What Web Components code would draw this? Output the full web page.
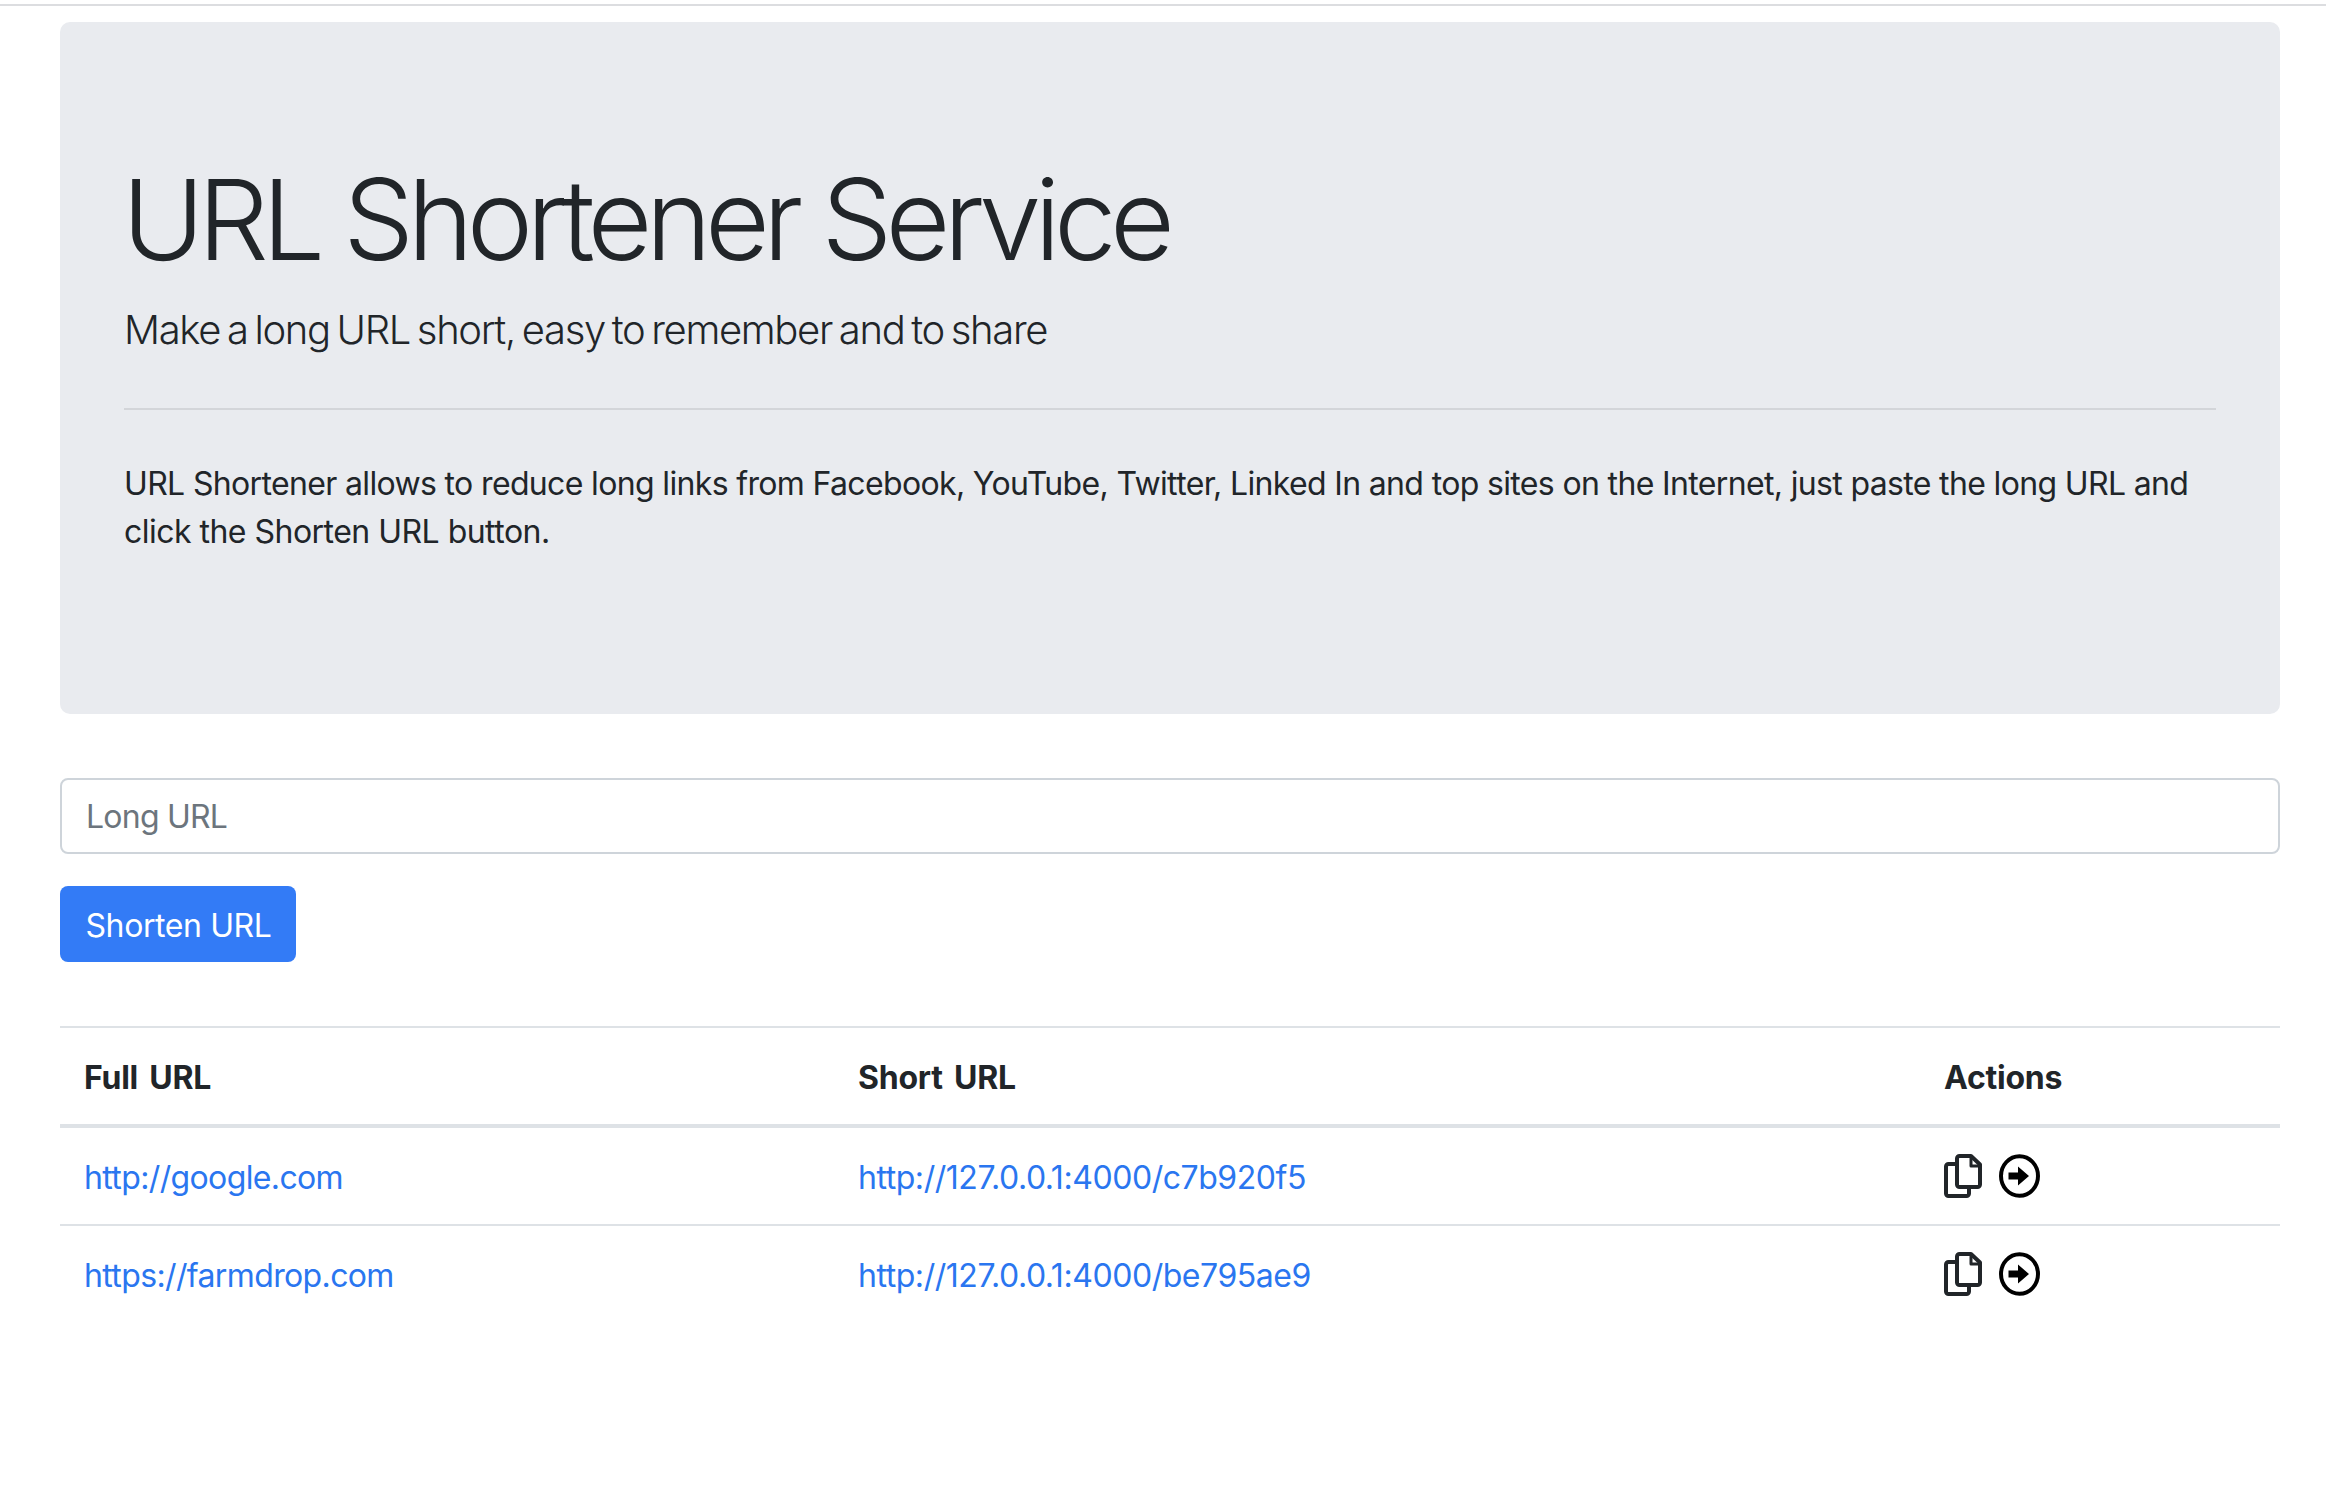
<!DOCTYPE html>
<html lang="en"><head><meta charset="utf-8"><title>URL Shortener</title>
<style>
html,body{margin:0;background:#fff}
body{font:400 32px/48px Inter,"Liberation Sans",sans-serif;color:#212529}
.line2{letter-spacing:-.52px}
</style></head><body>
<url-app>
  <url-hero title-text="URL Shortener Service" lead="Make a long URL short, easy to remember and to share">URL Shortener allows to reduce long links from Facebook, YouTube, Twitter, Linked In and top sites on the Internet, just paste the long URL and <span class="line2">click the Shorten URL button.</span></url-hero>
  <url-form></url-form>
  <url-table>
    <url-row full="http://google.com" short="http://127.0.0.1:4000/c7b920f5"></url-row>
    <url-row full="https://farmdrop.com" short="http://127.0.0.1:4000/be795ae9"></url-row>
  </url-table>
</url-app>
<script>
const def=(name,html,init)=>customElements.define(name,class extends HTMLElement{
  constructor(){super();this.attachShadow({mode:'open'}).innerHTML=html;}
  connectedCallback(){init&&init(this,this.shadowRoot);}
});
def('url-app',`<style>:host{display:block;padding:4px 46px 0 60px}
.rule{height:2px;background:#dcdde0;margin:0 -46px 16px -60px}</style><div class="rule"></div><slot></slot>`);
def('url-hero',`<style>:host{display:block;background:#e9ebef;border-radius:10px;padding:128px 64px;margin-bottom:64px;box-sizing:border-box;height:692px}
h1{margin:2px 0 14px -2px;font-size:112px;line-height:134px;font-weight:300;letter-spacing:-6.7px}
.lead{margin:0;font-size:40px;line-height:60px;font-weight:300;letter-spacing:-1.35px;word-spacing:-3px}
hr{border:0;height:2px;background:#d3d5d9;margin:48px 0 50px}
.body{margin:0;letter-spacing:-.65px}</style>
<h1></h1><p class="lead"></p><hr><p class="body"><slot></slot></p>`,(h,s)=>{s.querySelector('h1').textContent=h.getAttribute('title-text');s.querySelector('.lead').textContent=h.getAttribute('lead');});
def('url-form',`<style>:host{display:block;margin-bottom:64px}
input{display:block;box-sizing:border-box;width:100%;height:76px;margin:0 0 32px;padding:12px 24px;border:2px solid #ced4da;border-radius:8px;font:inherit;letter-spacing:-.77px;color:#495057;background:#fff;outline:0}
input::placeholder{color:#6c757d;opacity:1}
button{display:block;box-sizing:border-box;height:76px;width:236px;padding:3px 0 0 1px;border:0;border-radius:8px;background:#337bf6;color:#fff;font:inherit;letter-spacing:-.4px}</style>
<input placeholder="Long URL" aria-label="Long URL"><button type="button">Shorten URL</button>`);
def('url-table',`<style>:host{display:block;border-top:2px solid #dee2e6}
.head{display:grid;grid-template-columns:774px 1086px 360px;border-bottom:4px solid #dee2e6;font-weight:700;letter-spacing:-.25px;word-spacing:4px}
.head div{padding:26px 24px 22px}</style>
<div class="head"><div>Full URL</div><div>Short URL</div><div>Actions</div></div><slot></slot>`);
const copy=`<svg width="38" height="46" viewBox="0 0 38 46" fill="none" stroke="#212529" stroke-width="4" stroke-linejoin="round" stroke-linecap="round"><path d="M15.500 3H27l9 8.500V31.500a2.500 2.500 0 0 1-2.500 2.500h-18A2.500 2.500 0 0 1 13 31.500v-26A2.500 2.500 0 0 1 15.500 3z"/><path d="M27 4v9h8" stroke-width="3"/><path d="M12 11H4.500A2.500 2.500 0 0 0 2 13.500v27A2.500 2.500 0 0 0 4.500 43h18a2.500 2.500 0 0 0 2.500-2.500V35"/></svg>`;
const go=`<svg width="41" height="44" viewBox="0 0 41 44" fill="none"><ellipse cx="20.500" cy="22" rx="18.500" ry="19.800" stroke="#000" stroke-width="4"/><path d="M9.500 18.500H19V12.500L30 22 19 31.500V25.500H9.500z" fill="#000"/></svg>`;
def('url-row',`<style>:host{display:grid;grid-template-columns:774px 1086px 360px;border-bottom:2px solid #dee2e6}
:host(:last-child){border-bottom:0}
div{padding:26px 24px 22px;height:48px}
a{color:#2a76f0;text-decoration:none}
.f{letter-spacing:-.63px}.s{letter-spacing:-.45px}
.act{display:flex;align-items:flex-start;gap:17px;padding:25px 24px 23px}
svg{display:block;flex:none}
svg+svg{margin-top:1px}</style>
<div><a class="f" href="#"></a></div><div><a class="s" href="#"></a></div><div class="act">${copy}${go}</div>`,(h,s)=>{s.querySelector('.f').textContent=h.getAttribute('full');s.querySelector('.s').textContent=h.getAttribute('short');});
</script></body></html>
